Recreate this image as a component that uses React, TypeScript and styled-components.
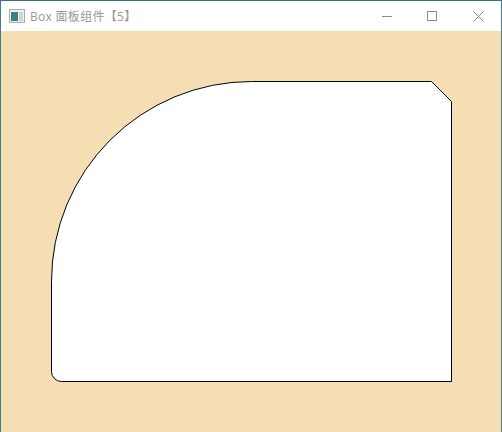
import React from "react";
import styled, {createGlobalStyle} from "styled-components";

const Global = createGlobalStyle`
  html, body {
    margin: 0;
    padding: 0;
    background: #fff;
  }
`;

const Win = styled.div`
  box-sizing: border-box;
  width: 502px;
  height: 432px;
  display: flex;
  flex-direction: column;
  border: 1px solid #3d7f93;
  border-top-color: #3a6f8c;
`;

const TitleBar = styled.div`
  height: 30px;
  flex: none;
  display: flex;
  align-items: center;
  background: #fff;
  padding-left: 8px;
`;

const Title = styled.span`
  margin-left: 5px;
  font: 12px "Open Sans", "Noto Sans CJK SC", sans-serif;
  letter-spacing: 0.3px;
  color: #999;
`;

const Controls = styled.div`
  margin-left: auto;
  display: flex;
  height: 100%;
`;

const Ctrl = styled.div`
  width: 45px;
  height: 100%;
  display: flex;
  align-items: center;
  justify-content: center;
`;

const Content = styled.div`
  flex: 1;
  background: #f5deb3;
  padding: 50px;
`;

const Shape = styled.svg`
  display: block;
`;

export default function App() {
    return (
        <Win>
            <Global/>
            <TitleBar>
                <svg width="16" height="16" viewBox="0 0 16 16">
                    <rect x="0.5" y="1.5" width="15" height="13" fill="#eef1f1" stroke="#a3acae"/>
                    <rect x="2" y="4" width="7" height="9" fill="#3d7f80"/>
                    <rect x="10" y="4" width="4" height="9" fill="#ccd4d4"/>
                </svg>
                <Title>Box 面板组件【5】</Title>
                <Controls>
                    <Ctrl>
                        <svg width="11" height="11" viewBox="0 0 11 11" style={{marginLeft: -2}}>
                            <path d="M0 5.5H10" stroke="#8a8a8a" fill="none"/>
                        </svg>
                    </Ctrl>
                    <Ctrl>
                        <svg width="11" height="11" viewBox="0 0 11 11" style={{marginLeft: -2}}>
                            <rect x="0.5" y="0.5" width="9" height="9" stroke="#8a8a8a" fill="none"/>
                        </svg>
                    </Ctrl>
                    <Ctrl>
                        <svg width="11" height="11" viewBox="0 0 11 11">
                            <path d="M0.5 0.5L10.5 10.5M10.5 0.5L0.5 10.5" stroke="#8a8a8a" fill="none"/>
                        </svg>
                    </Ctrl>
                </Controls>
            </TitleBar>
            <Content>
                <Shape width="401" height="301" viewBox="0 0 401 301">
                    <path
                        d="M200.5 0.5H380.5L400.5 20.5V300.5H10.5A10 10 0 0 1 0.5 290.5V200.5A200 200 0 0 1 200.5 0.5Z"
                        fill="#fff" stroke="#000"/>
                </Shape>
            </Content>
        </Win>
    );
}
